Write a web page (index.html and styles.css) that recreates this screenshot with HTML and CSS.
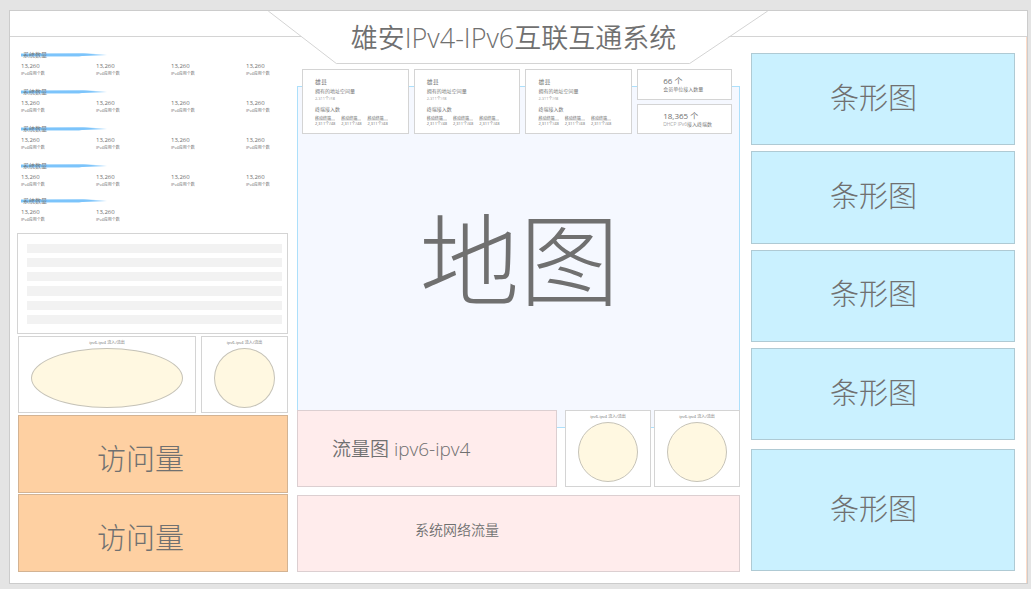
FILE: index.html
```html
<!DOCTYPE html>
<html lang="zh-CN">
<head>
<meta charset="utf-8">
<title>雄安IPv4-IPv6互联互通系统</title>
<link rel="stylesheet" href="styles.css">
</head>
<body>
<div class="board">
  <svg class="board-lines" viewBox="0 0 1016 54" preserveAspectRatio="none" aria-hidden="true">
    <path d="M0 25.5H291M718 25.5H1016M258 0L326 52.5H679L757 0"/>
  </svg>

  <section class="column column-left">
    <div class="stats">
      <section class="stat-group">
        <h2><svg viewBox="0 0 86 4" aria-hidden="true"><path class="soft" d="M0 0H64L75 1L64 2L58 4H0Z"/><path d="M0 1L62 0.5L86 2L62 3L0 3Z"/></svg>系统数量</h2>
        <dl><div><dt>13,260</dt><dd>IPv4应用个数</dd></div><div><dt>13,260</dt><dd>IPv4应用个数</dd></div><div><dt>13,260</dt><dd>IPv4应用个数</dd></div><div><dt>13,260</dt><dd>IPv4应用个数</dd></div></dl>
      </section>
      <section class="stat-group">
        <h2><svg viewBox="0 0 86 4" aria-hidden="true"><path class="soft" d="M0 0H64L75 1L64 2L58 4H0Z"/><path d="M0 1L62 0.5L86 2L62 3L0 3Z"/></svg>系统数量</h2>
        <dl><div><dt>13,260</dt><dd>IPv4应用个数</dd></div><div><dt>13,260</dt><dd>IPv4应用个数</dd></div><div><dt>13,260</dt><dd>IPv4应用个数</dd></div><div><dt>13,260</dt><dd>IPv4应用个数</dd></div></dl>
      </section>
      <section class="stat-group">
        <h2><svg viewBox="0 0 86 4" aria-hidden="true"><path class="soft" d="M0 0H64L75 1L64 2L58 4H0Z"/><path d="M0 1L62 0.5L86 2L62 3L0 3Z"/></svg>系统数量</h2>
        <dl><div><dt>13,260</dt><dd>IPv4应用个数</dd></div><div><dt>13,260</dt><dd>IPv4应用个数</dd></div><div><dt>13,260</dt><dd>IPv4应用个数</dd></div><div><dt>13,260</dt><dd>IPv4应用个数</dd></div></dl>
      </section>
      <section class="stat-group stat-group-tight">
        <h2><svg viewBox="0 0 86 4" aria-hidden="true"><path class="soft" d="M0 0H64L75 1L64 2L58 4H0Z"/><path d="M0 1L62 0.5L86 2L62 3L0 3Z"/></svg>系统数量</h2>
        <dl><div><dt>13,260</dt><dd>IPv4应用个数</dd></div><div><dt>13,260</dt><dd>IPv4应用个数</dd></div><div><dt>13,260</dt><dd>IPv4应用个数</dd></div><div><dt>13,260</dt><dd>IPv4应用个数</dd></div></dl>
      </section>
      <section class="stat-group stat-group-last">
        <h2><svg viewBox="0 0 86 4" aria-hidden="true"><path class="soft" d="M0 0H64L75 1L64 2L58 4H0Z"/><path d="M0 1L62 0.5L86 2L62 3L0 3Z"/></svg>系统数量</h2>
        <dl><div><dt>13,260</dt><dd>IPv4应用个数</dd></div><div><dt>13,260</dt><dd>IPv4应用个数</dd></div></dl>
      </section>
    </div>
    <div class="panel rows"><i></i><i></i><i></i><i></i><i></i><i></i></div>
    <div class="pair">
      <section class="panel flow"><h3>ipv6-ipv4 流入/流出</h3><div class="disc"></div></section>
      <section class="panel flow"><h3>ipv6-ipv4 流入/流出</h3><div class="disc"></div></section>
    </div>
    <section class="panel visits"><h2>访问量</h2></section>
    <section class="panel visits"><h2>访问量</h2></section>
  </section>

  <main class="column column-center">
    <h1>雄安IPv4-IPv6互联互通系统</h1>
    <div class="stage">
      <section class="map"><h2>地图</h2></section>
      <div class="cards">
        <article class="panel card">
          <h3>雄县</h3>
          <p>拥有的地址空间量</p><small>2,311个/48</small>
          <p class="card-sub">终端接入数</p>
          <ul><li><span>移动终端</span>2,311个/48</li><li><span>移动终端</span>2,311个/48</li><li><span>移动终端</span>2,311个/48</li></ul>
        </article>
        <article class="panel card">
          <h3>雄县</h3>
          <p>拥有的地址空间量</p><small>2,311个/48</small>
          <p class="card-sub">终端接入数</p>
          <ul><li><span>移动终端</span>2,311个/48</li><li><span>移动终端</span>2,311个/48</li><li><span>移动终端</span>2,311个/48</li></ul>
        </article>
        <article class="panel card">
          <h3>雄县</h3>
          <p>拥有的地址空间量</p><small>2,311个/48</small>
          <p class="card-sub">终端接入数</p>
          <ul><li><span>移动终端</span>2,311个/48</li><li><span>移动终端</span>2,311个/48</li><li><span>移动终端</span>2,311个/48</li></ul>
        </article>
        <div class="totals">
          <div class="panel total"><strong>66 个</strong><span>会员单位接入数量</span></div>
          <div class="panel total"><strong>18,365 个</strong><span>DHCP IPv6接入终端数</span></div>
        </div>
      </div>
      <div class="traffic">
        <section class="panel pink traffic-chart"><h2>流量图 ipv6-ipv4</h2></section>
        <section class="panel flow"><h3>ipv6-ipv4 流入/流出</h3><div class="disc"></div></section>
        <section class="panel flow"><h3>ipv6-ipv4 流入/流出</h3><div class="disc"></div></section>
      </div>
    </div>
    <section class="panel pink network"><h2>系统网络流量</h2></section>
  </main>

  <aside class="column column-right">
    <section class="panel bars"><h2>条形图</h2></section>
    <section class="panel bars"><h2>条形图</h2></section>
    <section class="panel bars"><h2>条形图</h2></section>
    <section class="panel bars"><h2>条形图</h2></section>
    <section class="panel bars bars-tall"><h2>条形图</h2></section>
  </aside>
</div>
</body>
</html>
```

FILE: styles.css
```css
:root {
  --ink: #707070;
  --line: #d4d4d4;
  --tint-line: rgba(112, 112, 112, 0.3);
}

* { box-sizing: border-box; }

h1, h2, h3, p, dl, dt, dd, ul { margin: 0; padding: 0; font-weight: 350; }

body {
  margin: 0;
  min-height: 100vh;
  padding: 10px 3px 5px 9px;
  display: flex;
  background: #e4e4e4;
  color: var(--ink);
  font-family: "Open Sans", "Noto Sans CJK SC", sans-serif;
  font-weight: 350;
}

.board {
  position: relative;
  flex: 1;
  display: grid;
  grid-template-columns: 271fr 445fr 264fr;
  column-gap: 9px;
  padding: 0 12px 11px 7px;
  border: 1px solid #ccc;
  background: #fff;
}

.board::after {
  content: "";
  position: absolute;
  top: 26px;
  right: 0;
  bottom: 0;
  border-right: 1px solid #ffdcc8;
}

.board-lines {
  position: absolute;
  top: 0;
  left: 0;
  width: 100%;
  height: 54px;
}

.board-lines path {
  fill: none;
  stroke: var(--line);
  vector-effect: non-scaling-stroke;
}

.column {
  position: relative;
  display: flex;
  flex-direction: column;
  min-width: 0;
}

.panel { border: 1px solid var(--line); background: #fff; }

/* Left column */
.column-left { gap: 2px; padding-top: 39px; }

.stats { flex: 1 0 auto; padding-left: 4px; }

.stat-group { height: 37px; }
.stat-group-tight { height: 35px; }
.stat-group-last { height: 30px; }

.stat-group h2 {
  position: relative;
  isolation: isolate;
  padding-left: 2px;
  font-size: 6px;
  line-height: 10px;
}

.stat-group svg {
  position: absolute;
  z-index: -1;
  top: 3px;
  left: 0;
  width: 86px;
  height: 4px;
  fill: #7cc4fb;
}

.stat-group .soft { fill: #c2e4fd; }

.stat-group dl {
  display: grid;
  grid-template-columns: repeat(4, 1fr);
  margin-right: -33px;
  padding-top: 2px;
}

.stat-group dt { font-size: 6px; line-height: 8px; font-weight: 400; }
.stat-group dd { font-size: 4px; line-height: 7px; font-weight: 400; }

.rows {
  display: grid;
  gap: 5px;
  height: 101px;
  padding: 10px 5px 9px 9px;
}

.rows i { background: #f2f2f2; }

.pair {
  display: grid;
  grid-template-columns: 178fr 87fr;
  gap: 5px;
  padding-left: 1px;
}

.flow {
  display: flex;
  flex-direction: column;
  align-items: center;
  height: 77px;
  padding: 2px 12px 0 12px;
}

.flow h3 { font-size: 4px; line-height: 7px; font-weight: 400; margin-bottom: 2px; }

.disc {
  width: 100%;
  height: 60px;
  border: 1px solid #c6c3b8;
  border-radius: 50%;
  background: #fff8e1;
}

.visits {
  display: flex;
  align-items: center;
  height: 78px;
  margin-left: 1px;
  padding: 10px 0 0 78px;
  border-color: var(--tint-line);
  background: #fed0a2;
}

.visits + .visits { margin-top: -1px; }

.visits h2, .bars h2 { font-size: 29px; line-height: 40px; font-weight: 300; }

/* Centre column */
.column-center { gap: 8px; padding-right: 2px; }

.column-center h1 {
  height: 50px;
  padding-right: 10px;
  font-size: 27px;
  line-height: 54px;
  text-align: center;
  white-space: nowrap;
}

.stage {
  flex: 1;
  display: grid;
  grid-template-columns: minmax(0, 1fr);
  grid-template-rows: 17px auto 1fr 18px auto;
}

.map {
  grid-area: 2 / 1 / 5 / 2;
  display: flex;
  align-items: center;
  justify-content: center;
  padding: 3px 0 0 2px;
  border: 1px solid #ade0fb;
  background: #f5f8ff;
}

.map h2 { font-size: 100px; line-height: 120px; font-weight: 300; }

.cards {
  grid-area: 1 / 1 / 3 / 2;
  display: grid;
  grid-template-columns: 107fr 107fr 107fr 95fr;
  gap: 5px;
  padding: 0 8px 0 5px;
}

.card { padding: 8px 0 7px 12px; font-size: 4px; line-height: 5px; }
.card h3 { font-size: 6px; line-height: 9px; }
.card p { font-size: 5px; line-height: 9px; }
.card small { display: block; font-size: 4px; line-height: 6px; }
.card .card-sub { padding-top: 3px; line-height: 8px; }
.card ul { display: flex; gap: 6px; padding-top: 3px; list-style: none; font-weight: 400; }
.card span { display: block; background: linear-gradient(#fff 50%, #e8e8e8 50%); }

.totals { display: grid; gap: 4px; }

.total { display: flex; flex-direction: column; justify-content: center; padding-left: 25px; }
.total strong { font-size: 8px; line-height: 11px; font-weight: 400; }
.total span { font-size: 5px; line-height: 7px; white-space: nowrap; }

.traffic {
  grid-area: 4 / 1 / 6 / 2;
  display: grid;
  grid-template-columns: 265fr 86fr 86fr;
  column-gap: 3px;
}

.pink {
  display: flex;
  align-items: center;
  border-color: #dccfd1;
  background: #ffecec;
}

.traffic-chart { margin-right: 5px; padding-left: 34px; }
.traffic-chart h2 { font-size: 19px; line-height: 28px; }
.network { height: 77px; padding: 0 0 8px 117px; }
.network h2 { font-size: 14px; line-height: 20px; }

/* Right column */
.column-right { gap: 6px; padding: 42px 0 1px; }

.bars {
  flex: 92 1 0;
  display: flex;
  align-items: center;
  padding: 0 0 3px 78px;
  border-color: var(--tint-line);
  background: #caf1ff;
}

.bars-tall { flex-grow: 123; margin-top: 3px; }
```
